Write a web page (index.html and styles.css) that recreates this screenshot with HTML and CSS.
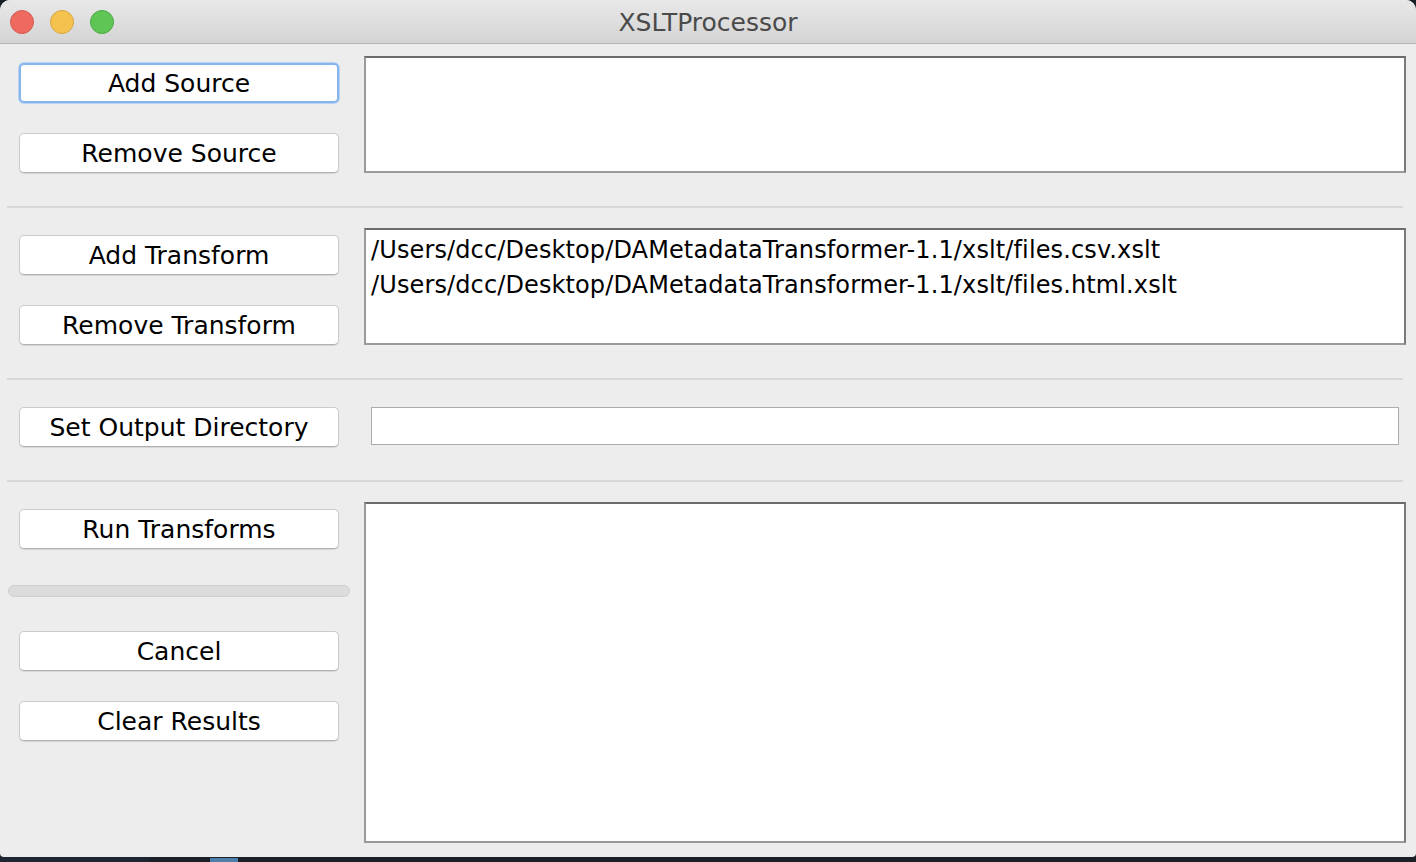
FILE: index.html
```html
<!DOCTYPE html>
<html>
<head>
<meta charset="utf-8">
<link rel="stylesheet" href="styles.css">
</head>
<body>
<div class="window">
  <div class="titlebar">
    <div class="lights">
      <span class="light red"></span>
      <span class="light yellow"></span>
      <span class="light green"></span>
    </div>
    <div class="title">XSLTProcessor</div>
  </div>
  <div class="content">
    <div class="section s1">
      <div class="buttons">
        <button class="btn focus">Add Source</button>
        <button class="btn">Remove Source</button>
      </div>
      <div class="area small"></div>
    </div>
    <div class="sep"></div>
    <div class="section s2">
      <div class="buttons">
        <button class="btn">Add Transform</button>
        <button class="btn">Remove Transform</button>
      </div>
      <div class="area small list">
        <div class="line">/Users/dcc/Desktop/DAMetadataTransformer-1.1/xslt/files.csv.xslt</div>
        <div class="line">/Users/dcc/Desktop/DAMetadataTransformer-1.1/xslt/files.html.xslt</div>
      </div>
    </div>
    <div class="sep"></div>
    <div class="section s3">
      <div class="buttons">
        <button class="btn">Set Output Directory</button>
      </div>
      <div class="field"></div>
    </div>
    <div class="sep"></div>
    <div class="section s4">
      <div class="buttons">
        <button class="btn">Run Transforms</button>
        <div class="progress"></div>
        <button class="btn">Cancel</button>
        <button class="btn">Clear Results</button>
      </div>
      <div class="area big"></div>
    </div>
  </div>
</div>
<div class="desktop">
  <span class="dock-a"></span>
  <span class="dock-b"></span>
</div>
</body>
</html>
```
FILE: styles.css
```css
html, body {
  margin: 0;
  padding: 0;
}
body {
  width: 1416px;
  height: 862px;
  overflow: hidden;
  background: #1b1f26;
  font-family: "DejaVu Sans", "Liberation Sans", sans-serif;
}
.window {
  width: 1416px;
  height: 857px;
  background: #ededed;
  border-radius: 10px 10px 4px 4px;
  overflow: hidden;
  display: flex;
  flex-direction: column;
}
.titlebar {
  height: 43px;
  flex: none;
  background: linear-gradient(#e8e8e8, #d4d4d4);
  border-bottom: 1px solid #b4b4b4;
  display: flex;
  align-items: center;
  position: relative;
}
.lights {
  display: flex;
  gap: 16px;
  padding-left: 10px;
}
.light {
  width: 24px;
  height: 24px;
  border-radius: 50%;
  box-sizing: border-box;
}
.red { background: #ee6a5f; border: 1px solid #d25a50; }
.yellow { background: #f5c250; border: 1px solid #d9a53f; }
.green { background: #5fc655; border: 1px solid #4ba845; }
.title {
  position: absolute;
  left: 0;
  right: 0;
  text-align: center;
  font-size: 25px;
  color: #4a4a4a;
  top: 8px;
}
.content {
  padding-top: 12px;
  display: flex;
  flex-direction: column;
}
.section {
  display: grid;
  grid-template-columns: 320px 1fr;
  column-gap: 25px;
  padding: 0 10px 0 19px;
}
.buttons {
  display: flex;
  flex-direction: column;
  gap: 30px;
  padding-top: 7px;
}
.btn {
  width: 320px;
  height: 40px;
  box-sizing: border-box;
  background: #ffffff;
  border: 1px solid #cbcbcb;
  border-bottom-color: #b0b0b0;
  border-radius: 5px;
  box-shadow: 0 1px 1px rgba(0,0,0,0.10);
  font-family: "DejaVu Sans", "Liberation Sans", sans-serif;
  font-size: 25px;
  color: #000;
  padding: 0;
  line-height: 37px;
  text-align: center;
}
.btn.focus {
  border: 2px solid #86b5ec;
  box-shadow: 0 0 0 1px #b8d4f4;
  line-height: 35px;
}
.area {
  background: #fff;
  border: 2px solid #9a9a9a;
  border-top-color: #6c6c6c;
  border-right-color: #7a7a7a;
  box-sizing: border-box;
}
.area.small {
  height: 117px;
}
.area.big {
  height: 341px;
}
.list {
  padding: 3px 5px 2px;
  font-size: 24px;
  letter-spacing: 0.12px;
  line-height: 35px;
  color: #000;
  white-space: nowrap;
}
.sep {
  height: 2px;
  background: #d7d7d7;
  margin: 33px 13px 20px 7px;
}
.s3 .buttons {
  padding-top: 0;
}
.s3 {
  padding-top: 7px;
}
.field {
  height: 38px;
  box-sizing: border-box;
  background: #fff;
  border: 1px solid #ababab;
  margin: 0 7px 0 7px;
}
.progress {
  width: 342px;
  height: 12px;
  margin: 6px 0 4px -11px;
  box-sizing: border-box;
  background: #dcdcdc;
  border: 1px solid #cfcfcf;
  border-radius: 6px;
}
.desktop {
  height: 5px;
  display: flex;
  align-items: flex-end;
}
.dock-a {
  width: 150px;
  height: 5px;
  background: #1e2530;
}
.dock-b {
  width: 28px;
  height: 4px;
  margin-left: 60px;
  background: #4f7fa8;
}
```
